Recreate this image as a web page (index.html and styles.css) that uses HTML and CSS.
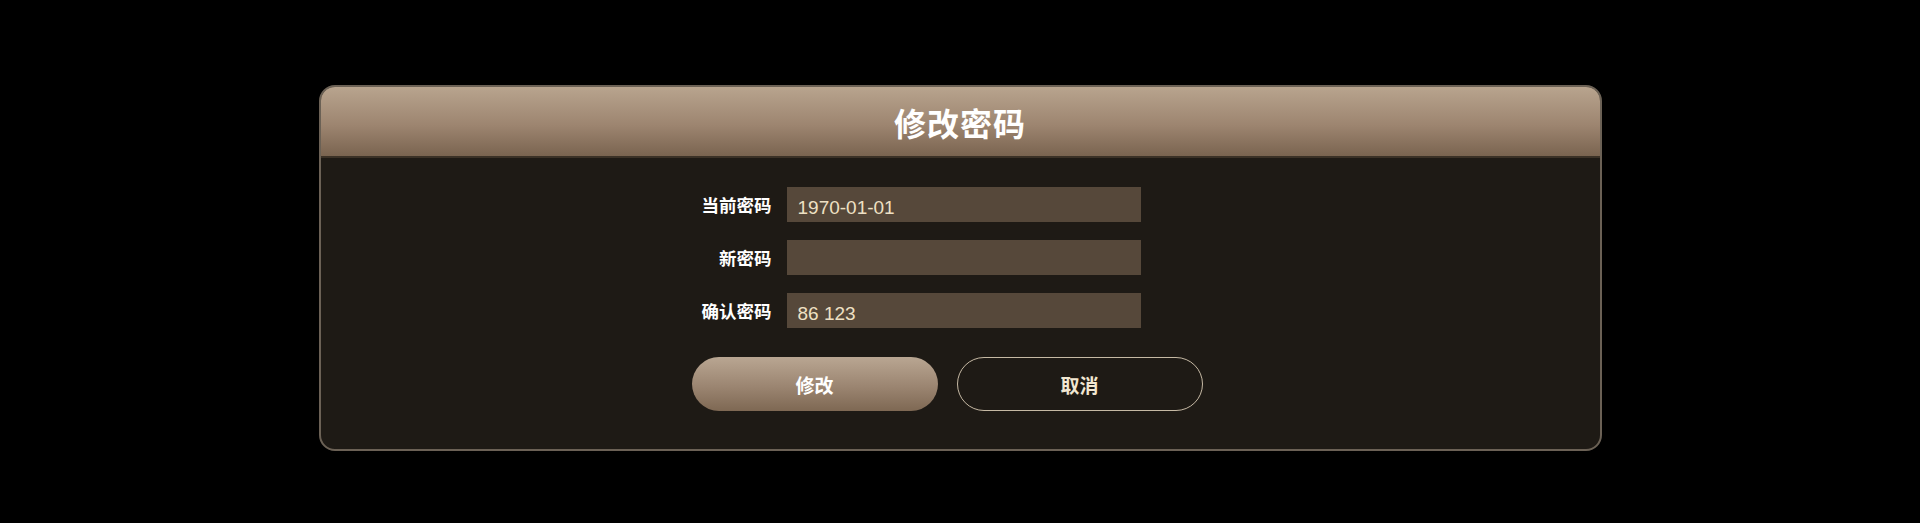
FILE: index.html
```html
<!DOCTYPE html>
<html lang="zh">
<head>
<meta charset="utf-8">
<title>修改密码</title>
<link rel="stylesheet" href="styles.css">
</head>
<body>
<div class="dialog">
  <div class="dialog-header">修改密码</div>
  <div class="dialog-body">
    <div class="form">
      <div class="row">
        <label class="label">当前密码</label>
        <div class="input">1970-01-01</div>
      </div>
      <div class="row">
        <label class="label">新密码</label>
        <div class="input"></div>
      </div>
      <div class="row">
        <label class="label">确认密码</label>
        <div class="input">86 123</div>
      </div>
      <div class="actions">
        <button class="btn btn-primary">修改</button>
        <button class="btn btn-ghost">取消</button>
      </div>
    </div>
  </div>
</div>
</body>
</html>
```

FILE: styles.css
```css
html, body {
  margin: 0;
  padding: 0;
  background: #000;
  height: 100%;
}
body {
  font-family: "Noto Sans CJK SC", "Noto Sans", sans-serif;
  padding-top: 85px;
  box-sizing: border-box;
}
.dialog {
  width: 1283px;
  height: 366px;
  margin: 0 auto;
  box-sizing: border-box;
  border: 2px solid #6b6155;
  border-radius: 16px;
  background: #1e1a15;
  overflow: hidden;
  display: flex;
  flex-direction: column;
}
.dialog-header {
  height: 71px;
  flex: none;
  box-sizing: border-box;
  border-bottom: 2px solid #3b3126;
  background: linear-gradient(to bottom, #b8a48e 0%, #9d8570 55%, #7a6450 100%);
  color: #fff;
  font-size: 32px;
  font-weight: 700;
  display: flex;
  align-items: center;
  justify-content: center;
  letter-spacing: 1px;
}
.dialog-body {
  flex: 1;
  padding: 29px 0 0 371px;
}
.form {
  width: 512px;
  display: flex;
  flex-direction: column;
  gap: 18px;
}
.row {
  display: flex;
  align-items: center;
  gap: 15px;
}
.label {
  width: 80px;
  text-align: right;
  color: #fff;
  font-size: 17.5px;
  font-weight: 700;
  line-height: 35px;
  white-space: nowrap;
}
.input {
  width: 354px;
  height: 35px;
  background: #56483a;
  color: #eee0c4;
  font-family: "Liberation Sans", "Noto Sans", sans-serif;
  font-size: 19px;
  line-height: 35px;
  padding: 3px 11px 0;
  box-sizing: border-box;
}
.actions {
  display: flex;
  gap: 19px;
  margin-top: 11px;
}
.btn {
  width: 246px;
  height: 54px;
  border-radius: 27px;
  font-family: "Noto Sans CJK SC", "Noto Sans", sans-serif;
  font-size: 19px;
  font-weight: 700;
  cursor: pointer;
  box-sizing: border-box;
  flex: none;
}
.btn-primary {
  border: none;
  background: linear-gradient(to bottom, #b9a692 0%, #9b8571 55%, #7e6853 100%);
  color: #fff;
}
.btn-ghost {
  background: transparent;
  border: 1px solid #c6b9a4;
  color: #f2e7d1;
}
```
